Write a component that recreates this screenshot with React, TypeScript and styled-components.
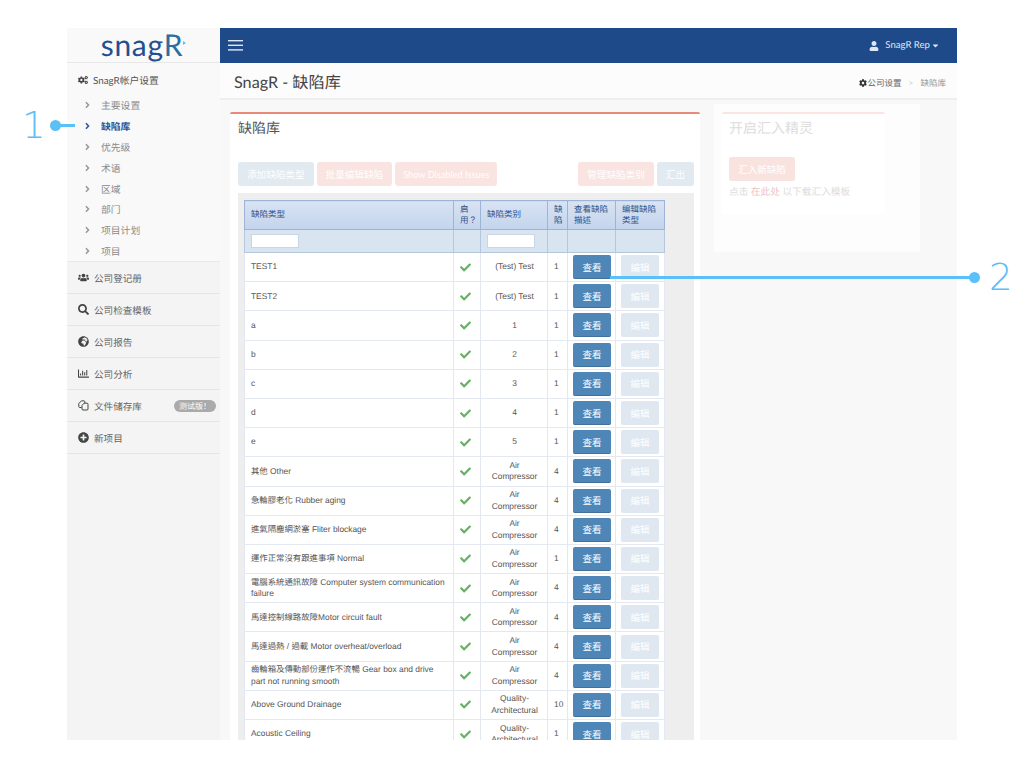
import * as React from 'react';
import styled, { createGlobalStyle } from 'styled-components';
import { FaCogs, FaUsers, FaSearch, FaGlobeAfrica, FaPlusCircle, FaUser, FaCheck, FaCog, FaAngleRight, FaCaretDown } from 'react-icons/fa';
import { FaRegChartBar } from 'react-icons/fa';

const UI_FONT = `"Lato", "Noto Sans CJK SC", sans-serif`;
const TABLE_FONT = `"Liberation Sans", "Noto Sans CJK TC", sans-serif`;
const ACCENT = '#5bc0f8';

const GlobalStyle = createGlobalStyle`
  html, body { margin: 0; padding: 0; background: #fff; }
  body { font-family: ${UI_FONT}; text-rendering: geometricPrecision; }
`;

const Page = styled.div`
  position: relative;
  width: 1024px;
  height: 768px;
  padding: 28px 67px;
  box-sizing: border-box;
  overflow: hidden;
`;

const Frame = styled.div`
  display: flex;
  width: 890px;
  height: 712px;
  overflow: hidden;
  background: #f8f8f8;
`;

const Sidebar = styled.aside`
  flex: 0 0 153px;
  background: #f9f9f9;
  display: flex;
  flex-direction: column;
`;

const LogoBar = styled.div`
  flex: 0 0 35px;
  box-sizing: border-box;
  border-bottom: 1px solid #e8e8e8;
  display: flex;
  align-items: center;
  justify-content: center;
  font-family: "Lato", sans-serif;
  font-size: 30px;
  letter-spacing: 0.7px;
  color: #234f8e;
  line-height: 34px;
`;

const LogoR = styled.span`
  color: #2a6f9e;
  position: relative;
  padding-right: 3px;
  &::after {
    content: '';
    position: absolute;
    right: 0;
    top: 13px;
    border-left: 3px solid #5bc0f8;
    border-top: 2px solid transparent;
    border-bottom: 2px solid transparent;
  }
`;

const SettingsHead = styled.div`
  display: flex;
  align-items: center;
  gap: 5px;
  padding: 6px 0 0 11px;
  height: 21px;
  font-size: 9.8px;
  color: #555;
  box-sizing: content-box;
  svg { font-size: 10px; color: #444; }
`;

const SubMenu = styled.ul`
  list-style: none;
  margin: 5px 0 0;
  padding: 0 0 0 12px;
  height: 166px;
`;

const SubItem = styled.li<{ $active?: boolean }>`
  display: flex;
  align-items: center;
  height: 20.8px;
  font-size: 9.8px;
  font-weight: ${p => (p.$active ? 700 : 400)};
  color: ${p => (p.$active ? '#2b5a99' : '#8a8a8a')};
  svg { width: 17px; margin-right: 5px; font-size: 10px; color: ${p => (p.$active ? '#2b5a99' : '#999')}; }
`;

const SectionList = styled.div`
  flex: 1;
  background: #f4f4f4;
  border-top: 1px solid #e8e8e8;
`;

const Section = styled.div`
  display: flex;
  align-items: center;
  height: 31px;
  border-bottom: 1px solid #e5e5e5;
  padding: 0 4px 0 11px;
  font-size: 9.6px;
  color: #666;
`;

const SectionIcon = styled.span`
  display: inline-flex;
  justify-content: flex-start;
  width: 16px;
  font-size: 11px;
  color: #444;
`;

const Badge = styled.span`
  margin-left: auto;
  background: #aaa;
  color: #fff;
  border-radius: 7px;
  font-size: 8px;
  line-height: 12px;
  padding: 0 5px;
`;

const Main = styled.main`
  flex: 1;
  display: flex;
  flex-direction: column;
  min-width: 0;
`;

const TopBar = styled.header`
  flex: 0 0 35px;
  background: #1f4a89;
  display: flex;
  align-items: center;
  justify-content: space-between;
  padding: 0 17px 0 8px;
  color: #dfe7f2;
`;

const UserMenu = styled.div`
  display: flex;
  align-items: center;
  gap: 4px;
  font-size: 9.6px;
  svg:first-child { font-size: 10px; margin-right: 2px; }
  svg:last-child { font-size: 9px; margin-left: -3px; }
`;

const PageHead = styled.div`
  flex: 0 0 35px;
  display: flex;
  align-items: center;
  justify-content: space-between;
  background: #fcfcfc;
  border-bottom: 2px solid #eee;
  padding: 0 11px 0 14px;
`;

const PageTitle = styled.h1`
  margin: 0;
  font-size: 16.2px;
  font-weight: 400;
  color: #444;
`;

const Crumbs = styled.div`
  display: flex;
  align-items: center;
  gap: 1px;
  padding-top: 4px;
  font-size: 8.5px;
  color: #666;
  svg { font-size: 8px; color: #333; }
`;

const CrumbSep = styled.span`
  margin: 0 6px;
  color: #ccc;
`;

const CrumbNow = styled.span`
  color: #999;
`;

const Body = styled.div`
  flex: 1;
  display: flex;
  align-items: flex-start;
  padding: 4px 0 0 10px;
  min-height: 0;
`;

const Box = styled.section`
  flex: 0 0 470px;
  margin-top: 8px;
  background: #fff;
  border-top: 2px solid #e8897a;
  border-radius: 2px 2px 0 0;
  padding: 0 6px 0 8px;
  box-sizing: border-box;
  height: 640px;
`;

const BoxTitle = styled.h2`
  margin: 0;
  height: 48px;
  padding-top: 5px;
  box-sizing: border-box;
  font-size: 14px;
  line-height: 18px;
  font-weight: 400;
  color: #555;
`;

const Toolbar = styled.div`
  display: flex;
  gap: 3px;
  height: 24px;
  margin-bottom: 7px;
`;

const ToolButton = styled.button<{ $tone: 'blue' | 'red'; $push?: boolean; $latin?: boolean }>`
  border: 0;
  padding: 0 ${p => (p.$latin ? 8 : 9)}px;
  border-radius: 3px;
  font-family: ${UI_FONT};
  font-size: ${p => (p.$latin ? 9.2 : 9.6)}px;
  color: #fff;
  opacity: 0.85;
  background: ${p => (p.$tone === 'blue' ? '#dce6ef' : '#f9e0dc')};
  margin-left: ${p => (p.$push ? 'auto' : 0)};
  white-space: nowrap;
`;

const Well = styled.div`
  background: #eee;
  padding: 7px 0 0 6px;
  height: 600px;
`;

const Table = styled.table`
  width: 420px;
  table-layout: fixed;
  border-collapse: collapse;
  font-family: ${TABLE_FONT};
  font-size: 8.4px;
  line-height: 11.5px;
  color: #555;
  background: #fff;
`;

const HeadCell = styled.th`
  height: 29px;
  padding: 0 5px 0 6px;
  box-sizing: border-box;
  text-align: left;
  font-weight: 400;
  font-size: 8.5px;
  color: #2f4f86;
  border: 1px solid #9db4d6;
  background: linear-gradient(#d8e3f3, #c3d4ec);
`;

const FilterCell = styled.td`
  height: 23px;
  padding: 0 5px 0 6px;
  box-sizing: border-box;
  background: #d9e4f1;
  border: 1px solid #b5c6dd;
`;

const FilterInput = styled.input`
  display: block;
  width: 48px;
  height: 14px;
  padding: 0;
  box-sizing: border-box;
  border: 1px solid #c9d6e8;
  background: #fff;
`;

const Row = styled.tr`
  height: 29.2px;
`;

const Cell = styled.td<{ $align?: 'left' | 'center' }>`
  padding: 0 5px 0 6px;
  box-sizing: border-box;
  text-align: ${p => p.$align || 'left'};
  border: 1px solid #e3e8f2;
  overflow: hidden;
`;

const ActionCell = styled(Cell)`
  padding: 0 0 0 5px;
`;

const ActionButton = styled.button<{ $disabled?: boolean }>`
  display: inline-block;
  vertical-align: middle;
  width: 38px;
  height: 24px;
  padding: 0;
  border: 0;
  border-radius: 2px;
  font-family: ${UI_FONT};
  font-size: 9.5px;
  color: #fff;
  background: ${p => (p.$disabled ? '#dfe8f0' : '#4f86b8')};
  border-bottom: 1px solid ${p => (p.$disabled ? '#dfe8f0' : '#417099')};
`;

const Check = styled(FaCheck)`
  display: block;
  font-size: 11px;
  color: #66b062;
`;

const GhostPanel = styled.div`
  flex: 0 0 206px;
  margin-left: 14px;
  height: 148px;
  box-sizing: border-box;
  padding: 8px 35px 0 8px;
  background: #fdfdfd;
`;

const GhostBox = styled.div`
  height: 100px;
  background: #fff;
  border-top: 2px solid #fae5e1;
  border-radius: 2px 2px 0 0;
  padding: 0 7px;
`;

const GhostTitle = styled.h2`
  margin: 0;
  height: 43px;
  padding-top: 5px;
  box-sizing: border-box;
  font-size: 14px;
  line-height: 18px;
  font-weight: 400;
  color: #ddd;
`;

const GhostButton = styled.button`
  display: block;
  width: 66px;
  height: 24px;
  border: 0;
  padding: 0;
  border-radius: 2px;
  background: #f9e3df;
  color: #fff;
  font-family: ${UI_FONT};
  font-size: 9.5px;
`;

const GhostNote = styled.p`
  margin: 5px 0 0;
  font-size: 9.7px;
  line-height: 13px;
  color: #ddd;
`;

const GhostLink = styled.span`
  color: #eec4c4;
`;

const Callout = styled.div<{ $left: number; $top: number; $width: number; $dot: 'left' | 'right' }>`
  position: absolute;
  left: ${p => p.$left}px;
  top: ${p => p.$top}px;
  width: ${p => p.$width}px;
  height: 3px;
  background: ${ACCENT};
  &::after {
    content: '';
    position: absolute;
    top: -4px;
    ${p => p.$dot}: -5px;
    width: 11px;
    height: 11px;
    border-radius: 50%;
    background: ${ACCENT};
  }
`;

const CalloutNumber = styled.div<{ $left: number; $top: number }>`
  position: absolute;
  left: ${p => p.$left}px;
  top: ${p => p.$top}px;
  font-family: "DejaVu Sans", sans-serif;
  font-weight: 200;
  font-size: 37px;
  line-height: 40px;
  color: ${ACCENT};
`;

const MenuIcon = () => (
  <svg width="15" height="11" viewBox="0 0 15 11" fill="#dfe7f2">
    <rect y="0" width="15" height="1.4" />
    <rect y="4.6" width="15" height="1.4" />
    <rect y="9.2" width="15" height="1.4" />
  </svg>
);

const FilesIcon = () => (
  <svg width="11" height="11" viewBox="0 0 11 11" fill="none" stroke="#444" strokeWidth="1">
    <path d="M3.5 7.5H1.5A1 1 0 0 1 .8 6.8V3.5L3.5.8H6a1 1 0 0 1 .8.8V3" />
    <path d="M4 5.5L6 3.2H9a1 1 0 0 1 1 1V9a1 1 0 0 1-1 1H5a1 1 0 0 1-1-1z" />
  </svg>
);

const subItems = ['主要设置', '缺陷库', '优先级', '术语', '区域', '部门', '项目计划', '项目'];

const sections: { label: string; icon: React.ReactNode; badge?: string }[] = [
  { label: '公司登记册', icon: <FaUsers /> },
  { label: '公司检查模板', icon: <FaSearch /> },
  { label: '公司报告', icon: <FaGlobeAfrica /> },
  { label: '公司分析', icon: <FaRegChartBar /> },
  { label: '文件储存库', icon: <FilesIcon />, badge: '测试版！' },
  { label: '新项目', icon: <FaPlusCircle /> },
];

const AIR = 'Air Compressor';
const QA = 'Quality-Architectural';

const rows: [string, string, number][] = [
  ['TEST1', '(Test) Test', 1],
  ['TEST2', '(Test) Test', 1],
  ['a', '1', 1],
  ['b', '2', 1],
  ['c', '3', 1],
  ['d', '4', 1],
  ['e', '5', 1],
  ['其他 Other', AIR, 4],
  ['急輪膠老化 Rubber aging', AIR, 4],
  ['進氣隔塵網淤塞 Fliter blockage', AIR, 4],
  ['運作正常沒有跟進事項 Normal', AIR, 1],
  ['電腦系統通訊故障 Computer system communication failure', AIR, 4],
  ['馬達控制線路故障Motor circuit fault', AIR, 4],
  ['馬達過熱 / 過載 Motor overheat/overload', AIR, 4],
  ['齒輪箱及傳動部份運作不流暢 Gear box and drive part not running smooth', AIR, 4],
  ['Above Ground Drainage', QA, 10],
  ['Acoustic Ceiling', QA, 1],
];

export default function App() {
  return (
    <Page>
      <GlobalStyle />
      <Frame>
        <Sidebar>
          <LogoBar>snag<LogoR>R</LogoR></LogoBar>
          <SettingsHead><FaCogs />SnagR帐户设置</SettingsHead>
          <SubMenu>
            {subItems.map(item => (
              <SubItem key={item} $active={item === '缺陷库'}><FaAngleRight />{item}</SubItem>
            ))}
          </SubMenu>
          <SectionList>
            {sections.map(s => (
              <Section key={s.label}>
                <SectionIcon>{s.icon}</SectionIcon>
                {s.label}
                {s.badge && <Badge>{s.badge}</Badge>}
              </Section>
            ))}
          </SectionList>
        </Sidebar>
        <Main>
          <TopBar>
            <MenuIcon />
            <UserMenu><FaUser />SnagR Rep<FaCaretDown /></UserMenu>
          </TopBar>
          <PageHead>
            <PageTitle>SnagR - 缺陷库</PageTitle>
            <Crumbs><FaCog />公司设置<CrumbSep>&gt;</CrumbSep><CrumbNow>缺陷库</CrumbNow></Crumbs>
          </PageHead>
          <Body>
            <Box>
              <BoxTitle>缺陷库</BoxTitle>
              <Toolbar>
                <ToolButton $tone="blue">添加缺陷类型</ToolButton>
                <ToolButton $tone="red">批量编辑缺陷</ToolButton>
                <ToolButton $tone="red" $latin>Show Disabled Issues</ToolButton>
                <ToolButton $tone="red" $push>管理缺陷类别</ToolButton>
                <ToolButton $tone="blue">汇出</ToolButton>
              </Toolbar>
              <Well>
                <Table>
                  <colgroup>
                    <col style={{ width: 209 }} />
                    <col style={{ width: 27 }} />
                    <col style={{ width: 67 }} />
                    <col style={{ width: 20 }} />
                    <col style={{ width: 48 }} />
                    <col style={{ width: 49 }} />
                  </colgroup>
                  <thead>
                    <tr>
                      <HeadCell>缺陷类型</HeadCell>
                      <HeadCell>启用？</HeadCell>
                      <HeadCell>缺陷类别</HeadCell>
                      <HeadCell>缺陷</HeadCell>
                      <HeadCell>查看缺陷描述</HeadCell>
                      <HeadCell>编辑缺陷类型</HeadCell>
                    </tr>
                    <tr>
                      <FilterCell><FilterInput /></FilterCell>
                      <FilterCell />
                      <FilterCell><FilterInput /></FilterCell>
                      <FilterCell />
                      <FilterCell />
                      <FilterCell />
                    </tr>
                  </thead>
                  <tbody>
                    {rows.map(([name, category, count]) => (
                      <Row key={name}>
                        <Cell>{name}</Cell>
                        <Cell><Check /></Cell>
                        <Cell $align="center">{category}</Cell>
                        <Cell>{count}</Cell>
                        <ActionCell><ActionButton>查看</ActionButton></ActionCell>
                        <ActionCell><ActionButton $disabled>编辑</ActionButton></ActionCell>
                      </Row>
                    ))}
                  </tbody>
                </Table>
              </Well>
            </Box>
            <GhostPanel>
              <GhostBox>
                <GhostTitle>开启汇入精灵</GhostTitle>
                <GhostButton>汇入新缺陷</GhostButton>
                <GhostNote>点击 <GhostLink>在此处</GhostLink> 以下载汇入模板</GhostNote>
              </GhostBox>
            </GhostPanel>
          </Body>
        </Main>
      </Frame>
      <CalloutNumber $left={22} $top={106}>1</CalloutNumber>
      <Callout $left={55} $top={124} $width={20} $dot="left" />
      <Callout $left={610} $top={276} $width={365} $dot="right" />
      <CalloutNumber $left={989} $top={258}>2</CalloutNumber>
    </Page>
  );
}
